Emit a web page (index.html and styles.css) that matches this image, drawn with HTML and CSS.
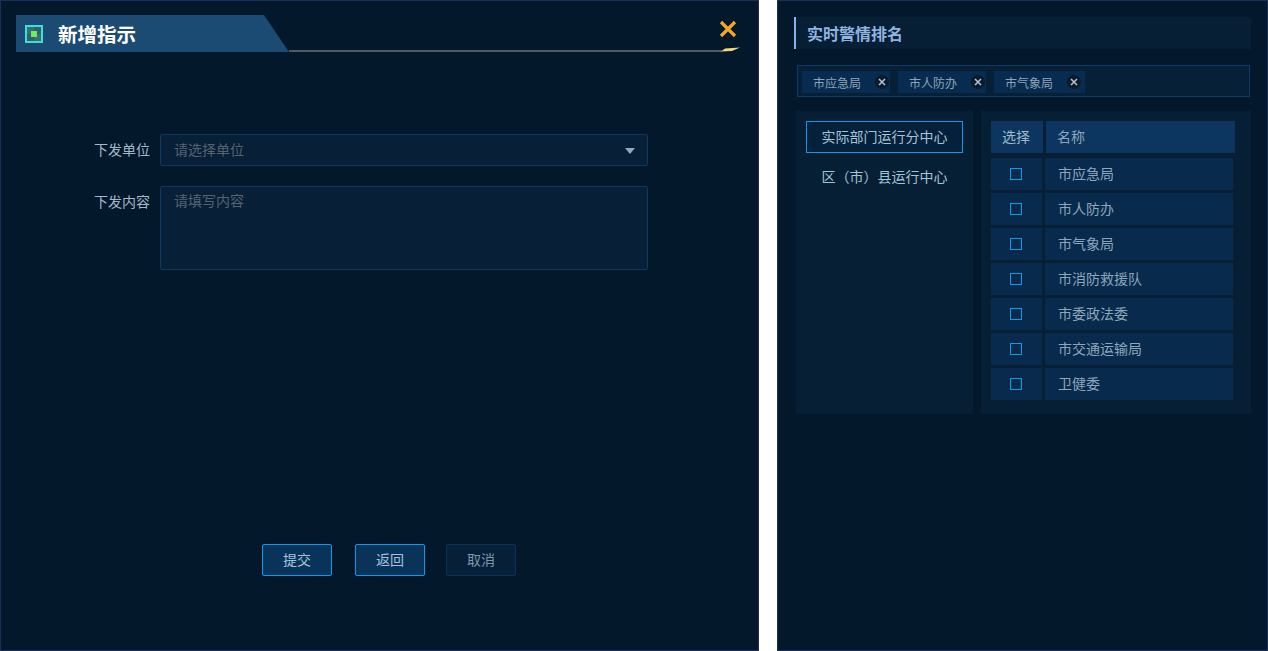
FILE: index.html
```html
<!DOCTYPE html>
<html lang="zh-CN">
<head>
  <meta charset="utf-8">
  <title>新增指示</title>
  <link rel="stylesheet" href="styles.css">
</head>
<body>
  <div class="page">
    <!-- left dialog -->
    <div class="panel dialog">
      <div class="dialog-head">
        <div class="dialog-title">
          <span class="title-icon"><span class="title-dot"></span></span>
          <span>新增指示</span>
        </div>
        <div class="head-side">
          <svg class="close-icon" width="18" height="18" viewBox="0 0 18 18">
            <path d="M2 2 L16 16 M16 2 L2 16" stroke="#f5a623" stroke-width="3.2" fill="none"/>
          </svg>
          <svg class="spark" width="20" height="5" viewBox="0 0 20 5">
            <path d="M1 4.500 L5 1.500 L20 0.500 L12 4 Z" fill="#f7d774"/>
          </svg>
        </div>
      </div>

      <div class="form">
        <div class="form-row">
          <label class="form-label">下发单位</label>
          <div class="field field-select">
            <span class="placeholder">请选择单位</span>
            <span class="caret"></span>
          </div>
        </div>
        <div class="form-row">
          <label class="form-label">下发内容</label>
          <div class="field field-area">
            <span class="placeholder">请填写内容</span>
          </div>
        </div>
      </div>

      <div class="actions">
        <button class="btn">提交</button>
        <button class="btn">返回</button>
        <button class="btn btn-muted">取消</button>
      </div>
    </div>

    <!-- right panel -->
    <div class="panel ranking">
      <h3 class="rank-title">实时警情排名</h3>

      <div class="tags">
        <span class="tag">市应急局<i class="tag-x"><svg width="8" height="8" viewBox="0 0 8 8"><path d="M1 1 L7 7 M7 1 L1 7" stroke="#b7c4d2" stroke-width="1.500"/></svg></i></span>
        <span class="tag">市人防办<i class="tag-x"><svg width="8" height="8" viewBox="0 0 8 8"><path d="M1 1 L7 7 M7 1 L1 7" stroke="#b7c4d2" stroke-width="1.500"/></svg></i></span>
        <span class="tag tag-wide">市气象局<i class="tag-x"><svg width="8" height="8" viewBox="0 0 8 8"><path d="M1 1 L7 7 M7 1 L1 7" stroke="#b7c4d2" stroke-width="1.500"/></svg></i></span>
      </div>

      <div class="picker">
        <div class="tabs">
          <div class="tab selected">实际部门运行分中心</div>
          <div class="tab">区（市）县运行中心</div>
        </div>
        <div class="list">
          <div class="list-head">
            <div class="cell-check">选择</div>
            <div class="cell-name">名称</div>
          </div>
          <div class="list-row"><div class="cell-check"><span class="box"></span></div><div class="cell-name">市应急局</div></div>
          <div class="list-row"><div class="cell-check"><span class="box"></span></div><div class="cell-name">市人防办</div></div>
          <div class="list-row"><div class="cell-check"><span class="box"></span></div><div class="cell-name">市气象局</div></div>
          <div class="list-row"><div class="cell-check"><span class="box"></span></div><div class="cell-name">市消防救援队</div></div>
          <div class="list-row"><div class="cell-check"><span class="box"></span></div><div class="cell-name">市委政法委</div></div>
          <div class="list-row"><div class="cell-check"><span class="box"></span></div><div class="cell-name">市交通运输局</div></div>
          <div class="list-row"><div class="cell-check"><span class="box"></span></div><div class="cell-name">卫健委</div></div>
        </div>
      </div>
    </div>
  </div>
</body>
</html>
```

FILE: styles.css
```css
html, body {
  height: 100%;
}
body {
  margin: 0;
  background-color: #fff;
  font-family: "Noto Sans CJK SC", "Liberation Sans", sans-serif;
  font-size: 14px;
  color: #a3b8cb;
  overflow: hidden;
}
.page {
  display: flex;
  justify-content: space-between;
  width: 1268px;
  height: 651px;
}
.panel {
  box-sizing: border-box;
  height: 651px;
  background-color: #03182b;
  border: 1px solid #1b2f5a;
}

/* dialog */
.dialog {
  width: 759px;
  display: flex;
  flex-direction: column;
}
.dialog-head {
  display: flex;
  margin: 14px 18px 0 15px;
  height: 37px;
}
.dialog-title {
  display: flex;
  align-items: center;
  width: 273px;
  background-color: #1b4a72;
  clip-path: polygon(0 0, 248px 0, 273px 100%, 0 100%);
  color: #fff;
  font-size: 19.500px;
  font-weight: 700;
}
.title-icon {
  box-sizing: border-box;
  display: flex;
  align-items: center;
  justify-content: center;
  width: 18px;
  height: 18px;
  margin: 0 15px 0 9px;
  border: 2px solid #3be0cf;
  background: conic-gradient(#2f5f78 0 25%, #3a6a7c 25% 50%, #2f5f78 50% 75%, #3a6a7c 75% 100%);
}
.title-dot {
  width: 6px;
  height: 6px;
  background-color: #6cf04c;
}
.head-side {
  flex: 1;
  position: relative;
  height: 37px;
  border-bottom: 2px solid #4e5a64;
  box-sizing: border-box;
  margin-right: 18px;
}
.close-icon {
  position: absolute;
  right: -15px;
  top: 5px;
}
.spark {
  position: absolute;
  right: -18px;
  bottom: -2px;
}

/* form */
.form {
  display: flex;
  flex-direction: column;
  gap: 20px;
  margin: 82px 0 0 79px;
}
.form-row {
  display: flex;
  align-items: flex-start;
}
.form-label {
  width: 70px;
  margin-right: 10px;
  text-align: right;
  line-height: 30px;
  color: #a3b8cb;
}
.field {
  box-sizing: border-box;
  width: 488px;
  background-color: #072037;
  border: 1px solid #10375e;
  border-radius: 2px;
  padding: 0 14px 0 13px;
}
.field-select {
  display: flex;
  justify-content: space-between;
  align-items: center;
  height: 32px;
  line-height: 28px;
  padding-bottom: 2px;
}
.field-area {
  height: 84px;
  line-height: 26px;
}
.placeholder {
  color: #56636f;
}
.caret {
  width: 0;
  height: 0;
  margin: 3px -2px 0 0;
  border-left: 5px solid transparent;
  border-right: 5px solid transparent;
  border-top: 6px solid #8fa9c4;
}

/* buttons */
.actions {
  display: flex;
  margin: 274px 0 0 261px;
}
.btn {
  width: 70px;
  height: 32px;
  margin-right: 23px;
  padding: 0 0 2px;
  background-color: #0a3359;
  border: 1px solid #0a9bea;
  border-radius: 2px;
  color: #a5c3de;
  font-family: inherit;
  font-size: 14px;
}
.btn-muted {
  margin-left: -2px;
  background-color: #06203a;
  border-color: #0e3253;
  color: #7f97ad;
}

/* right side */
.ranking {
  width: 491px;
  padding: 16px 16px 0 16px;
}
.rank-title {
  box-sizing: border-box;
  height: 32px;
  margin: 0;
  padding-left: 11px;
  background-color: #071f35;
  border-left: 2px solid #86b4ec;
  color: #8fb4e0;
  font-size: 16px;
  font-weight: 700;
  line-height: 32px;
}
.tags {
  box-sizing: border-box;
  display: flex;
  gap: 8px;
  height: 32px;
  margin: 16px 1px 0 3px;
  padding: 5px 4px;
  background-color: #062037;
  border: 1px solid #0e3a63;
}
.tag {
  display: flex;
  align-items: center;
  justify-content: space-between;
  box-sizing: border-box;
  width: 88px;
  height: 22px;
  padding: 0 1px 0 11px;
  background-color: #082c4f;
  color: #8ea3b8;
  font-size: 12px;
}
.tag-wide {
  width: 91px;
  padding-right: 4px;
}
.tag-x {
  display: flex;
  align-items: center;
  justify-content: center;
  width: 14px;
  height: 14px;
  border-radius: 50%;
  background-color: #0b1a2c;
}
.picker {
  display: flex;
  gap: 8px;
  margin: 14px 0 0 2px;
}
.tabs {
  box-sizing: border-box;
  width: 177px;
  height: 303px;
  padding: 10px;
  background-color: #071f35;
}
.tab {
  box-sizing: border-box;
  height: 32px;
  margin-bottom: 8px;
  text-align: center;
  line-height: 28px;
  border: 1px solid transparent;
  color: #a5c3d8;
}
.tab.selected {
  border-color: #0a9bea;
  background-color: #04203a;
}
.list {
  box-sizing: border-box;
  width: 270px;
  height: 303px;
  padding: 10px;
  background-color: #071f35;
}
.list-head,
.list-row {
  display: flex;
  height: 32px;
  line-height: 30px;
}
.list-head {
  gap: 3px;
  margin-bottom: 5px;
}
.list-head .cell-check {
  width: 52px;
  padding-right: 2px;
  box-sizing: border-box;
  text-align: center;
}
.list-head .cell-check,
.list-head .cell-name {
  background-color: #0c3660;
}
.list-head .cell-name {
  width: 189px;
  padding-left: 11px;
  box-sizing: border-box;
  color: #8ea6bd;
}
.list-row {
  gap: 3px;
  margin-bottom: 3px;
}
.list-row .cell-check {
  display: flex;
  align-items: center;
  justify-content: center;
  width: 51px;
  background-color: #082a4c;
}
.list-row .cell-name {
  box-sizing: border-box;
  width: 188px;
  padding-left: 13px;
  background-color: #082a4c;
  color: #8ea6bd;
}
.box {
  box-sizing: border-box;
  width: 12px;
  height: 12px;
  margin-right: 1px;
  border: 1px solid #0a9bea;
}
```
